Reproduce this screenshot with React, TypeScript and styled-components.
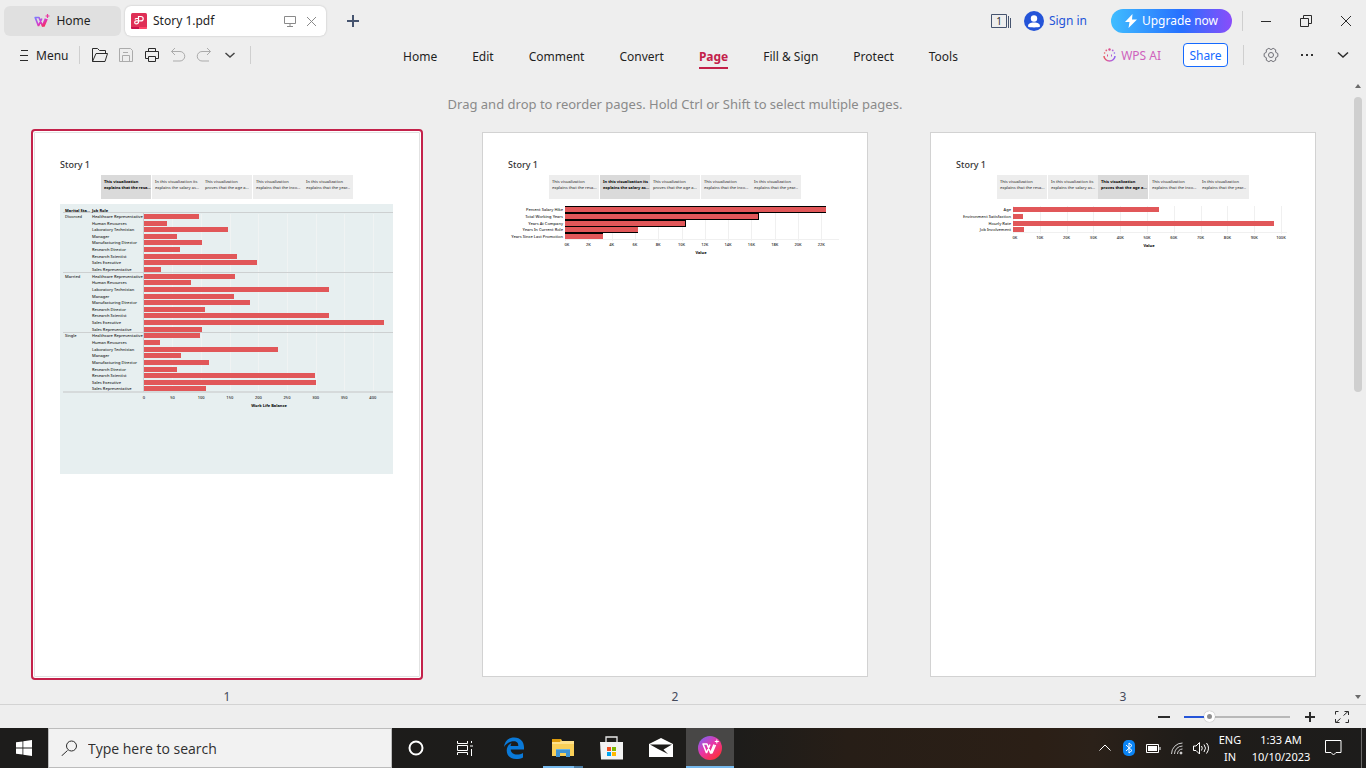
import React from "react";
import styled, { createGlobalStyle, css } from "styled-components";

const Global = createGlobalStyle`
  *, *::before, *::after { box-sizing: border-box; }
  body {
    margin: 0;
    background: #eeeeee;
    color: #1f1f1f;
    font-family: "Noto Sans", "Open Sans", sans-serif;
    font-size: 12px;
  }
  button, input { font: inherit; color: inherit; }
  svg { display: block; flex: none; }
`;

const Window = styled.div`
  display: flex;
  flex-direction: column;
  height: 100vh;
  overflow: hidden;
`;

const PlainButton = styled.button`
  display: flex;
  align-items: center;
  justify-content: center;
  padding: 0;
  border: 0;
  background: none;
  white-space: nowrap;
`;

/* Title bar */

const TitleBar = styled.header`
  display: flex;
  align-items: center;
  height: 41px;
  padding-left: 4px;
`;

const TitleTab = styled.div<{ $active?: boolean }>`
  display: flex;
  align-items: center;
  height: 30px;
  border-radius: 6px;
  ${(p) =>
    p.$active
      ? css`
          width: 201px;
          margin-left: 4px;
          padding: 0 9px 0 6px;
          background: #ffffff;
          box-shadow: 0 0 2px #b8b8b8;
        `
      : css`
          width: 117px;
          justify-content: center;
          background: #e0e0e0;
        `}
`;

const TabLabel = styled(PlainButton)`
  gap: 6px;
`;

const TabTools = styled.div`
  display: flex;
  gap: 9px;
  margin-left: auto;
`;

const NewTab = styled(PlainButton)`
  width: 24px;
  height: 24px;
  margin-left: 15px;
`;

const AccountTools = styled.div`
  display: flex;
  align-items: center;
  margin-left: auto;
`;

const SignIn = styled(PlainButton)`
  gap: 5px;
  margin: 0 24px 0 12px;
  color: #2454d8;
`;

const Upgrade = styled(PlainButton)`
  gap: 5px;
  width: 121px;
  height: 24px;
  border-radius: 12px;
  color: #ffffff;
  background: linear-gradient(90deg, #40bdff 0%, #2670ff 58%, #8a4dfa 100%);
`;

const Divider = styled.span<{ $h?: number }>`
  width: 1px;
  height: ${(p) => p.$h ?? 18}px;
  background: #cfcfcf;
`;

const WindowControls = styled.div`
  display: flex;
  align-items: center;
  margin-left: 10px;
`;

const WindowButtons = styled.div`
  display: flex;
  margin-left: 3px;
`;

const WindowButton = styled(PlainButton)`
  width: 40px;
  height: 40px;
`;

/* Menu bar */

const MenuBar = styled.div`
  display: grid;
  grid-template-columns: 1fr auto 1fr;
  height: 31px;
  padding: 0 13px 0 18px;
`;

const QuickTools = styled.div`
  display: flex;
  align-items: center;
  height: 28px;
`;

const MenuButton = styled(PlainButton)`
  gap: 6px;
  margin-right: 11px;
`;

const ToolButton = styled(PlainButton)`
  width: 26px;
  height: 26px;
`;

const ToolStrip = styled.div`
  display: flex;
  margin: 0 7px;
`;

const Ribbon = styled.nav`
  display: flex;
  gap: 35px;
  padding-right: 10px;
`;

const RibbonTab = styled(PlainButton)<{ $active?: boolean }>`
  height: 28px;
  padding-top: 5px;
  border-bottom: 2px solid transparent;
  ${(p) =>
    p.$active &&
    css`
      color: #c3214a;
      font-weight: 700;
      border-bottom-color: #c3214a;
    `}
`;

const RightTools = styled(QuickTools)`
  justify-content: flex-end;
`;

const AiButton = styled(PlainButton)`
  gap: 5px;
  margin-right: 22px;
  color: #cf62bd;
`;

const ShareButton = styled(PlainButton)`
  width: 45px;
  height: 24px;
  margin-right: 15px;
  border: 1px solid #1469ff;
  border-radius: 4px;
  background: #ffffff;
  color: #1469ff;
`;

const IconStrip = styled.div`
  display: flex;
  gap: 16px;
  margin-left: 17px;
`;

const IconButton = styled(PlainButton)`
  width: 20px;
  height: 20px;
`;

/* Page organiser */

const Workspace = styled.main`
  display: flex;
  flex: 1;
  min-height: 0;
  overflow: hidden;
`;

const Organiser = styled.div`
  flex: 1;
  min-width: 0;
  padding-top: 22px;
`;

const Hint = styled.p`
  margin: 0;
  font-size: 13px;
  line-height: 20px;
  text-align: center;
  color: #8a8a8a;
`;

const PageGrid = styled.div`
  display: grid;
  grid-template-columns: repeat(auto-fit, 386px);
  justify-content: center;
  gap: 40px 62px;
  padding-top: 18px;
`;

const PageFigure = styled.figure`
  margin: 0;
`;

const Sheet = styled.article<{ $selected?: boolean }>`
  height: 545px;
  padding: 27px 26px 27px 25px;
  border: 1px solid ${(p) => (p.$selected ? "#e2e2e2" : "#d2d2d2")};
  background: #ffffff;
  ${(p) =>
    p.$selected &&
    css`
      outline: 2px solid #c3214a;
      outline-offset: 1px;
      border-radius: 1px;
      box-shadow: 0 0 0 1px #ffffff;
    `}
`;

const PageNumber = styled.figcaption`
  padding-top: 11px;
  line-height: 18px;
  text-align: center;
  color: #44495a;
`;

const StoryTitle = styled.h2`
  margin: 0;
  height: 15px;
  font-size: 9px;
  line-height: 10px;
  font-weight: 500;
  color: #333333;
`;

const StoryTabs = styled.div`
  display: flex;
  padding-left: 41px;
  margin-bottom: 5px;
`;

const StoryPoint = styled.div<{ $active: boolean; $gap: boolean }>`
  width: 50px;
  height: 24px;
  padding: 4px 0 0 3px;
  margin-left: ${(p) => (p.$gap ? 1 : 0)}px;
  overflow: hidden;
  background: ${(p) => (p.$active ? "#dadada" : "#ededed")};
  color: ${(p) => (p.$active ? "#000000" : "#444444")};
  font-size: 4px;
  line-height: 6px;
  font-weight: ${(p) => (p.$active ? 700 : 500)};
  white-space: pre;
`;

const ChartSvg = styled.svg`
  width: 100%;
  font-size: 4px;
  font-weight: 500;
  fill: #222222;
`;

const ScrollTrack = styled.div`
  display: flex;
  flex-direction: column;
  align-items: center;
  width: 16px;
  padding: 12px 0 5px;
`;

const ScrollThumb = styled.div`
  width: 8px;
  height: 48%;
  margin: 9px 0 auto;
  border-radius: 4px;
  background: #cfcfcf;
`;

/* Status bar */

const StatusBar = styled.div`
  display: flex;
  align-items: center;
  justify-content: flex-end;
  height: 24px;
  padding-right: 17px;
  border-top: 1px solid #d3d3d3;
`;

const ZoomSlider = styled.input`
  appearance: none;
  width: 106px;
  height: 12px;
  margin: 0 14px;
  background: linear-gradient(90deg, #2454d8 24%, #b8b8b8 24%) center / 100% 2px no-repeat;
  &::-webkit-slider-thumb {
    appearance: none;
    width: 11px;
    height: 11px;
    border: 3px solid #ffffff;
    border-radius: 50%;
    background: #8e8e8e;
    box-shadow: 0 0 1px #888888;
  }
`;

const FitButton = styled(PlainButton)`
  margin-left: 19px;
`;

/* Taskbar */

const Taskbar = styled.footer`
  display: flex;
  height: 40px;
  color: #ffffff;
  background: linear-gradient(90deg, #1d1c1b 0%, #1d1c1a 54%, #271e17 62%, #2b1f16 76%, #2b2119 80%, #1f1c19 87%, #1d1c1b 100%);
`;

const StartButton = styled(PlainButton)`
  width: 48px;
`;

const SearchBox = styled.label`
  display: flex;
  align-items: center;
  gap: 11px;
  width: 344px;
  padding-left: 12px;
  border: 1px solid #bcbcbc;
  background: #f2f2f2;
`;

const SearchInput = styled.input`
  flex: 1;
  min-width: 0;
  padding: 0;
  border: 0;
  outline: 0;
  background: none;
  font-family: "Open Sans", "Noto Sans", sans-serif;
  font-size: 14px;
  &::placeholder {
    color: #2f2f2f;
    opacity: 1;
  }
`;

const Apps = styled.div`
  display: flex;
  gap: 1px;
`;

const TaskButton = styled(PlainButton)<{ $state?: "open" | "current" }>`
  position: relative;
  width: 48px;
  height: 40px;
  background: ${(p) => (p.$state === "current" ? "#484746" : "none")};
  ${(p) =>
    p.$state &&
    css`
      &::after {
        content: "";
        position: absolute;
        bottom: 0;
        left: ${p.$state === "open" ? 4 : 0}px;
        right: ${p.$state === "open" ? 4 : 0}px;
        height: 2px;
        background: ${p.$state === "open"
          ? "linear-gradient(90deg, #76b9ed 78%, #4a7aa0 78%)"
          : "#76b9ed"};
      }
    `}
`;

const Tray = styled.div`
  display: flex;
  align-items: center;
  margin-left: auto;
`;

const TrayButton = styled(PlainButton)`
  width: 24px;
  height: 40px;
`;

const TrayText = styled.div<{ $w: number }>`
  width: ${(p) => p.$w}px;
  font-size: 11px;
  line-height: 17px;
  text-align: center;
  white-space: pre;
`;

const NoticeButton = styled(PlainButton)`
  width: 36px;
  height: 40px;
  margin-right: 10px;
`;

const DesktopEdge = styled.div`
  width: 5px;
  height: 40px;
  border-left: 1px solid #6b6a69;
`;

/* Data */

const storyPoints = [
  "This visualization\nexplains that the resa...",
  "In this visualization its\nexplains the salary as...",
  "This visualization\nproves that the age a...",
  "This visualization\nexplains that the inco...",
  "In this visualization\nexplains that the year...",
];

const roles = [
  "Healthcare Representative",
  "Human Resources",
  "Laboratory Technician",
  "Manager",
  "Manufacturing Director",
  "Research Director",
  "Research Scientist",
  "Sales Executive",
  "Sales Representative",
];

const balance = [
  { status: "Divorced", lengths: [55, 23, 84, 33, 58, 36, 93, 113, 17] },
  { status: "Married", lengths: [91, 47, 185, 90, 106, 61, 185, 240, 58] },
  { status: "Single", lengths: [56, 16, 134, 37, 65, 33, 171, 172, 62] },
];

const rowTop = (i: number) => Math.round(9.9 + i * 6.635);

function BalanceChart() {
  return (
    <ChartSvg viewBox="0 0 333 270" role="img" aria-label="Work life balance by marital status and job role">
      <rect width="333" height="270" fill="#e7eff0" />
      <g fill="#f0f3f3">
        {[1, 2, 3, 4, 5, 6, 7, 8].map((n) => (
          <rect key={n} x={Math.round(83.5 + n * 28.7)} y="10" width="1" height="178" />
        ))}
      </g>
      <g fill="#cdd0d1">
        {[8, 68, 128].map((y) => (
          <rect key={y} x="3" y={y} width="330" height="1" />
        ))}
        <rect x="3" y="187" width="330" height="2" fill="#d6dadb" />
        <rect x="83" y="8" width="1" height="180" />
      </g>
      <text x="5" y="8" fontWeight="700" fill="#000000">Marital Sta...</text>
      <text x="32" y="8" fontWeight="700" fill="#000000">Job Role</text>
      {balance.map((group, g) => (
        <g key={group.status}>
          <text x="5" y={rowTop(g * 9) + 4}>{group.status}</text>
          {group.lengths.map((length, r) => {
            const top = rowTop(g * 9 + r);
            return (
              <g key={roles[r]}>
                <text x="32" y={top + 4}>{roles[r]}</text>
                <rect x="84" y={top} width={length} height="5" fill="#e15759" />
              </g>
            );
          })}
        </g>
      ))}
      <g textAnchor="middle">
        {[0, 50, 100, 150, 200, 250, 300, 350, 400].map((v, i) => (
          <text key={v} x={84 + i * 28.6} y="195">{v}</text>
        ))}
        <text x="209" y="203" fontWeight="700" fill="#000000">Work Life Balance</text>
      </g>
    </ChartSvg>
  );
}

type Measure = { name: string; length: number; top: number };

type MeasureChartProps = {
  label: string;
  axis: number;
  step: number;
  ticks: string[];
  base: number;
  end: number;
  center: number;
  rows: Measure[];
  outlined?: boolean;
};

function MeasureChart({ label, axis, step, ticks, base, end, center, rows, outlined }: MeasureChartProps) {
  return (
    <ChartSvg viewBox="0 0 333 60" role="img" aria-label={label}>
      <g fill="#f0f0f0">
        {ticks.map((t, i) => (
          <rect key={t} x={Math.round(axis + i * step)} y="2" width="1" height={base} />
        ))}
        <rect x={axis} y={base} width={end - axis} height="1" />
      </g>
      {rows.map((row, i) => (
        <g key={row.name}>
          <text x={axis - 2} y={row.top + 4} textAnchor="end">{row.name}</text>
          {outlined && (
            <rect x={axis} y={row.top - 1} width={row.length} height={i < 3 ? 7 : 6} fill="#000000" />
          )}
          <rect
            x={axis}
            y={row.top}
            width={outlined && (i === 1 || i === 2) ? row.length - 1 : row.length}
            height="5"
            fill="#e15759"
          />
        </g>
      ))}
      {outlined && <rect x={axis} y="28" width={rows[3].length} height="1" fill="#000000" />}
      <g textAnchor="middle">
        {ticks.map((t, i) => (
          <text key={t} x={axis + i * step + (i ? 0 : 2)} y={base + 7}>{t}</text>
        ))}
        <text x={center} y={base + 15} fontWeight="700" fill="#000000">Value</text>
      </g>
    </ChartSvg>
  );
}

const yearRows: Measure[] = [
  { name: "Percent Salary Hike", length: 261, top: 3 },
  { name: "Total Working Years", length: 194, top: 10 },
  { name: "Years At Company", length: 121, top: 17 },
  { name: "Years In Current Role", length: 73, top: 23 },
  { name: "Years Since Last Promotion", length: 38, top: 30 },
];

const rateRows: Measure[] = [
  { name: "Age", length: 146, top: 3 },
  { name: "Environment Satisfaction", length: 10, top: 10 },
  { name: "Hourly Rate", length: 261, top: 17 },
  { name: "Job Involvement", length: 11, top: 23 },
];

const storyCharts = [
  <BalanceChart />,
  <MeasureChart
    label="Salary hike and years worked"
    axis={57}
    step={23.3}
    ticks={Array.from({ length: 12 }, (_, i) => `${i * 2}K`)}
    base={35}
    end={331}
    center={193}
    rows={yearRows}
    outlined
  />,
  <MeasureChart
    label="Age, satisfaction, hourly rate and involvement"
    axis={57}
    step={26.8}
    ticks={Array.from({ length: 11 }, (_, i) => `${i * 10}K`)}
    base={28}
    end={331}
    center={193}
    rows={rateRows}
  />,
];

/* Icons */

type LineProps = { w?: number; h?: number; color?: string; sw?: number; d?: string; children?: React.ReactNode };

const Line = ({ w = 16, h = 16, color = "#2b2b2b", sw = 1, d, children }: LineProps) => (
  <svg width={w} height={h} viewBox={`0 0 ${w} ${h}`} fill="none" stroke={color} strokeWidth={sw} aria-hidden="true">
    {d && <path d={d} />}
    {children}
  </svg>
);

const WpsMark = () => (
  <svg width="16" height="14" viewBox="0 0 16 14" fill="none" aria-hidden="true">
    <defs>
      <linearGradient id="wps-mark" x1="0" y1="0" x2="1" y2="1">
        <stop offset="0" stopColor="#7a7cff" />
        <stop offset=".5" stopColor="#d63bd0" />
        <stop offset="1" stopColor="#ff2a3c" />
      </linearGradient>
    </defs>
    <path
      d="M4.5 12 1.200 3.500H5L8.500 12 11.500 4.500M4.500 12 7.800 4.500M8.500 12h1.500L13 5"
      stroke="url(#wps-mark)"
      strokeWidth="1.700"
      strokeLinejoin="round"
    />
    <path d="M13.500 0v4M11.500 2h4" stroke="#ec38a0" strokeWidth="1.200" />
  </svg>
);

const PdfMark = () => (
  <svg width="16" height="16" viewBox="0 0 16 16" fill="none" aria-hidden="true">
    <rect width="16" height="16" rx="1.500" fill="#df2f56" />
    <path d="M0 14h8v2H1.500A1.500 1.500 0 0 1 0 14.500z" fill="#c9104a" />
    <path d="M8 14h8v.5a1.500 1.500 0 0 1-1.500 1.500H8z" fill="#ff4468" />
    <path
      d="M7.500 9.500V3.500H10a2.200 2.200 0 0 1 0 4.400H5.200a1.500 1.500 0 0 0 0 3c1.500 0 2.300-.4 2.300-1.800M7.500 5.500H5.500a1.500 1.500 0 0 0-1.500 1"
      stroke="#fff"
      strokeWidth="1.200"
    />
  </svg>
);

const Avatar = () => (
  <svg width="20" height="20" viewBox="0 0 20 20" aria-hidden="true">
    <circle cx="10" cy="10" r="10" fill="#2454d8" />
    <circle cx="10" cy="7.500" r="3.200" fill="#fff" />
    <path d="M4 15.500c0-3 2.200-4 6-4s6 1 6 4c-1.200 1.200-10.800 1.200-12 0z" fill="#fff" />
  </svg>
);

const Bolt = () => (
  <svg width="12" height="14" viewBox="0 0 12 14" aria-hidden="true">
    <path d="M7.500 0 0 8h4.500L3.500 14 12 5.500H7z" fill="#fff" />
  </svg>
);

const AiMark = () => (
  <svg width="13" height="14" viewBox="0 0 13 14" fill="none" aria-hidden="true">
    <defs>
      <linearGradient id="ai-mark">
        <stop offset="0" stopColor="#e85c5c" />
        <stop offset=".5" stopColor="#cc5fc4" />
        <stop offset="1" stopColor="#8a62f2" />
      </linearGradient>
    </defs>
    <path d="M1 8a5.500 5 0 0 0 11 0" stroke="url(#ai-mark)" strokeWidth="1.500" />
    <path d="M4 6.500h1v2H4z" fill="#dd5090" />
    <path d="M8 6.500h1v2H8z" fill="#b061d8" />
    <circle cx="1.600" cy="5" r=".8" fill="#e85c5c" />
    <circle cx="3.300" cy="2.400" r=".9" fill="#e2607a" />
    <circle cx="6.500" cy="1.500" r="1.200" fill="#dd5090" />
    <circle cx="9.700" cy="2.400" r=".9" fill="#b061d8" />
    <circle cx="11.400" cy="5" r=".8" fill="#8a62f2" />
  </svg>
);

const Triangle = ({ down }: { down?: boolean }) => (
  <svg width="6" height="4" viewBox="0 0 6 4" aria-hidden="true">
    <path d={down ? "M0 0h6L3 4z" : "M0 4h6L3 0z"} fill="#6b6b6b" />
  </svg>
);

const WindowsLogo = () => (
  <svg width="16" height="16" viewBox="0 0 16 16" fill="#fff" aria-hidden="true">
    <path d="M0 2.300 6.500 1.400V7.500H0zM7.300 1.300 16 0v7.500H7.300zM0 8.400h6.500v6.200L0 13.700zM7.300 8.400H16V16l-8.700-1.200z" />
  </svg>
);

const EdgeLogo = () => (
  <svg width="20" height="22" viewBox="0 0 20 22" aria-hidden="true">
    <path
      d="M0 10C.6 4 4.600.5 10.300.5 16.500.5 20 5 20 10.200v2.400H6.700c.2 3.200 3 5 6.300 5 2.300 0 4.200-.6 6-1.600v4.500c-1.800 1-4.300 1.500-6.900 1.500C6.500 22 2.700 18.600 2.700 13.500c0-3.600 2-6.300 5-7.800C6.900 6.700 6.600 8 6.600 8.900h7.700c0-2.900-1.300-4.600-4.700-4.600C6 4.300 2.300 6.500 0 10z"
      fill="#0a79d8"
    />
  </svg>
);

const FolderIcon = () => (
  <svg width="22" height="18" viewBox="0 0 22 18" aria-hidden="true">
    <path d="M0 0h9l1 2h12v15H0z" fill="#f9cf58" />
    <path d="M0 0h9l-1 3H0z" fill="#dd9b0c" />
    <path d="M0 3h8l2-1h12v3H0z" fill="#ffe18a" />
    <path d="M4 18v-8h14v8h-4v-4H8v4z" fill="#3f93d2" />
    <path d="M4 10h14v1H4z" fill="#69b4e6" />
  </svg>
);

const StoreIcon = () => (
  <svg width="24" height="24" viewBox="0 0 24 24" aria-hidden="true">
    <path d="M6 8V1h11v7" fill="none" stroke="#e8e8e8" strokeWidth="1.300" />
    <path d="M0 6h23v17.500H1z" fill="#f3f3f3" />
    <path d="M7 11h4v4H7z" fill="#f25022" />
    <path d="M12 11h4v4h-4z" fill="#7fba00" />
    <path d="M7 16h4v4H7z" fill="#00a4ef" />
    <path d="M12 16h4v4h-4z" fill="#ffb900" />
  </svg>
);

const MailIcon = () => (
  <svg width="24" height="20" viewBox="0 0 24 20" aria-hidden="true">
    <path d="M0 6 12 0l12 6v13H0z" fill="#fff" />
    <path d="M1 6.500h22L14.500 11.500 19 16 9 11z" fill="#1d1c1a" />
  </svg>
);

const WpsApp = () => (
  <svg width="24" height="24" viewBox="0 0 24 24" fill="none" aria-hidden="true">
    <defs>
      <linearGradient id="wps-app" x1="0" y1="0" x2=".8" y2="1">
        <stop offset="0" stopColor="#6c6cff" />
        <stop offset=".5" stopColor="#e835a8" />
        <stop offset="1" stopColor="#ff3030" />
      </linearGradient>
    </defs>
    <circle cx="12" cy="12" r="12" fill="url(#wps-app)" />
    <path
      d="M8.500 17 5 8h4l3.500 9L16 8.500M8.500 17l3.500-8.500M12.500 17H14l3.500-8"
      stroke="#fff"
      strokeWidth="1.500"
      strokeLinejoin="round"
    />
    <path d="M18.800 3.500v4M16.800 5.500h4" stroke="#fff" />
  </svg>
);

const BluetoothIcon = () => (
  <svg width="12" height="16" viewBox="0 0 12 16" fill="none" aria-hidden="true">
    <rect width="12" height="16" rx="5" fill="#0a84f5" />
    <path d="m3 5 6 5.500L6 13V3l3 2.500L3 11" stroke="#fff" />
  </svg>
);

const ribbon = ["Home", "Edit", "Comment", "Convert", "Page", "Fill & Sign", "Protect", "Tools"];

export default function App() {
  return (
    <Window>
      <Global />
      <TitleBar>
        <TitleTab>
          <TabLabel><WpsMark />Home</TabLabel>
        </TitleTab>
        <TitleTab $active>
          <TabLabel><PdfMark />Story 1.pdf</TabLabel>
          <TabTools>
            <PlainButton aria-label="Present">
              <Line w={12} h={12} color="#8a8a8a" d="M.5 1.500h11v7H.500zM6 8.500v2.500M3 11.500h6" />
            </PlainButton>
            <PlainButton aria-label="Close tab">
              <Line w={12} h={12} color="#8a8a8a" d="m2 2 9 9M11 2l-9 9" />
            </PlainButton>
          </TabTools>
        </TitleTab>
        <NewTab aria-label="New tab"><Line w={12} h={12} color="#46546f" sw={2} d="M6 0v12M0 6h12" /></NewTab>
        <AccountTools>
          <PlainButton aria-label="Windows, 1 open">
            <svg width="21" height="14" viewBox="0 0 21 14" aria-hidden="true">
              <path d="M.5.500h15v13H.500zM17.500 2v12M19.500 4v10" fill="none" stroke="#46546f" />
              <text x="8" y="11" fontSize="10" textAnchor="middle" fill="#333333">1</text>
            </svg>
          </PlainButton>
          <SignIn><Avatar />Sign in</SignIn>
          <Upgrade><Bolt />Upgrade now</Upgrade>
        </AccountTools>
        <WindowControls>
          <Divider $h={20} />
          <WindowButtons>
            <WindowButton aria-label="Minimize"><Line w={12} h={12} d="M1 6.500h10" /></WindowButton>
            <WindowButton aria-label="Restore">
              <Line w={12} h={12} d="M.5 3.500h8v8h-8zM3.500 3.500v-3h8v8h-3" />
            </WindowButton>
            <WindowButton aria-label="Close"><Line w={12} h={12} d="m1 1 10 10M11 1 1 11" /></WindowButton>
          </WindowButtons>
        </WindowControls>
      </TitleBar>

      <MenuBar>
        <QuickTools>
          <MenuButton><Line w={12} h={12} d="M3 1.500h7M2 6.500h8M2 11.500h8" />Menu</MenuButton>
          <Divider />
          <ToolStrip>
            <ToolButton aria-label="Open">
              <Line d="M.5 14.500v-13h5l2 2h6v2.500M.500 14.500l3.500-8h11.500l-2.500 8z" />
            </ToolButton>
            <ToolButton aria-label="Save">
              <Line color="#ababab" d="M1.500 1.500h11l2 2v11h-13zM4.500 14.500v-6h7v6M5 5.500h5" />
            </ToolButton>
            <ToolButton aria-label="Print">
              <Line d="M4.500 4.500v-3h7v3M4 11.500H1.500v-7h13v7H12M4.500 9.500h7v5h-7z" />
            </ToolButton>
            <ToolButton aria-label="Undo">
              <Line color="#ababab" d="M5 1 1.500 4.500 5 8M1.500 4.500H10a4.500 4.500 0 0 1 0 9.500H3" />
            </ToolButton>
            <ToolButton aria-label="Redo">
              <Line color="#ababab" d="M11 1l3.500 3.500L11 8M14.500 4.500H6A4.500 4.500 0 0 0 6 14h7" />
            </ToolButton>
            <ToolButton aria-label="More quick tools">
              <Line w={12} h={12} sw={1.5} color="#444444" d="m1.500 4 4.500 4 4.500-4" />
            </ToolButton>
          </ToolStrip>
          <Divider />
        </QuickTools>
        <Ribbon>
          {ribbon.map((name) => (
            <RibbonTab key={name} $active={name === "Page"}>{name}</RibbonTab>
          ))}
        </Ribbon>
        <RightTools>
          <AiButton><AiMark />WPS AI</AiButton>
          <ShareButton>Share</ShareButton>
          <Divider $h={20} />
          <IconStrip>
            <IconButton aria-label="Settings">
              <Line
                color="#6f6f76"
                d="M14.850 9.460 12.680 10.700V13.200L10.160 14.660 8 13.400 5.840 14.660 3.320 13.200V10.700L1.150 9.460V6.540L3.320 5.300V2.800L5.840 1.340 8 2.600 10.160 1.340 12.680 2.800V5.300L14.850 6.540z"
              >
                <circle cx="8" cy="8" r="2.500" />
              </Line>
            </IconButton>
            <IconButton aria-label="More options">
              <svg width="14" height="4" viewBox="0 0 14 4" fill="#333333" aria-hidden="true">
                <path d="M1 1h2v2H1zM6 1h2v2H6zM11 1h2v2h-2z" />
              </svg>
            </IconButton>
            <IconButton aria-label="Collapse ribbon">
              <Line w={12} h={12} sw={1.5} d="m1 3.500 5 4.500 5-4.500" />
            </IconButton>
          </IconStrip>
        </RightTools>
      </MenuBar>

      <Workspace>
        <Organiser>
          <Hint>Drag and drop to reorder pages. Hold Ctrl or Shift to select multiple pages.</Hint>
          <PageGrid>
            {storyCharts.map((chart, page) => (
              <PageFigure key={page}>
                <Sheet $selected={page === 0}>
                  <StoryTitle>Story 1</StoryTitle>
                  <StoryTabs>
                    {storyPoints.map((text, i) => (
                      <StoryPoint key={i} $active={i === page} $gap={i === 1 || i === 3}>{text}</StoryPoint>
                    ))}
                  </StoryTabs>
                  {chart}
                </Sheet>
                <PageNumber>{page + 1}</PageNumber>
              </PageFigure>
            ))}
          </PageGrid>
        </Organiser>
        <ScrollTrack>
          <Triangle />
          <ScrollThumb />
          <Triangle down />
        </ScrollTrack>
      </Workspace>

      <StatusBar>
        <PlainButton aria-label="Zoom out"><Line w={12} h={12} sw={2} d="M0 6h12" /></PlainButton>
        <ZoomSlider type="range" aria-label="Zoom" min={0} max={100} defaultValue={21} />
        <PlainButton aria-label="Zoom in"><Line w={12} h={12} sw={2} d="M1 6h10M6 1v10" /></PlainButton>
        <FitButton aria-label="Full screen">
          <Line w={14} h={14} d="M.5 4.500v-3h3M13.500 9.500v3h-3M8.500 5.500l4.500-4M9.500 1.500h4v3.500M5.500 8.500 1 12.500M.5 9v3.500h4" />
        </FitButton>
      </StatusBar>

      <Taskbar>
        <StartButton aria-label="Start"><WindowsLogo /></StartButton>
        <SearchBox>
          <Line d="M6.500 10.500.5 16">
            <circle cx="10.500" cy="6" r="5" />
          </Line>
          <SearchInput type="search" aria-label="Search" placeholder="Type here to search" />
        </SearchBox>
        <Apps>
          <TaskButton aria-label="Cortana"><Line color="#ffffff" sw={2}><circle cx="8" cy="8" r="6.500" /></Line></TaskButton>
          <TaskButton aria-label="Task view">
            <Line color="#ffffff" d="M.5 1v2.500h10V1M.500 5.500h10v5H.500zM.500 15v-2.500h10V15M14.500 1v2M14.500 9v7M13 6h3" />
          </TaskButton>
          <TaskButton aria-label="Edge"><EdgeLogo /></TaskButton>
          <TaskButton aria-label="File Explorer" $state="open"><FolderIcon /></TaskButton>
          <TaskButton aria-label="Store"><StoreIcon /></TaskButton>
          <TaskButton aria-label="Mail"><MailIcon /></TaskButton>
          <TaskButton aria-label="WPS Office" $state="current"><WpsApp /></TaskButton>
        </Apps>
        <Tray>
          <TrayButton aria-label="Hidden icons">
            <Line w={12} h={12} color="#ffffff" d="m.5 8.500 5.500-5.500 5.500 5.500" />
          </TrayButton>
          <TrayButton aria-label="Bluetooth"><BluetoothIcon /></TrayButton>
          <TrayButton aria-label="Battery">
            <Line w={15} h={9} color="#ffffff" d="M.5.500h12v8H.500zM14 3v3">
              <rect x="2.500" y="2.500" width="8" height="4" fill="#ffffff" />
            </Line>
          </TrayButton>
          <TrayButton aria-label="Wi-Fi">
            <Line w={14} h={14} color="#d0d0d0" d="M1.500 13A11 11 0 0 1 12.500 2M4.500 13a8 8 0 0 1 8-8M7.500 13a5 5 0 0 1 5-5">
              <circle cx="11" cy="12" r="1" fill="#ffffff" />
            </Line>
          </TrayButton>
          <TrayButton aria-label="Volume">
            <Line
              w={17}
              h={14}
              color="#ffffff"
              d="M.5 5v4.500H3L6.500 13V1.500L3 5zM8.500 5q1.500 2 0 4.500M11 3.500q3 3.500 0 7.500M13.500 2q4 5 0 10.500"
            />
          </TrayButton>
          <TrayText $w={34}>{"ENG\nIN"}</TrayText>
          <TrayText $w={68}>{"1:33 AM\n10/10/2023"}</TrayText>
          <NoticeButton aria-label="Notifications">
            <Line w={17} h={16} color="#ffffff" d="M.5.500h15.500v12h-5L8.500 15 6 12.500H.500z" />
          </NoticeButton>
          <DesktopEdge />
        </Tray>
      </Taskbar>
    </Window>
  );
}
